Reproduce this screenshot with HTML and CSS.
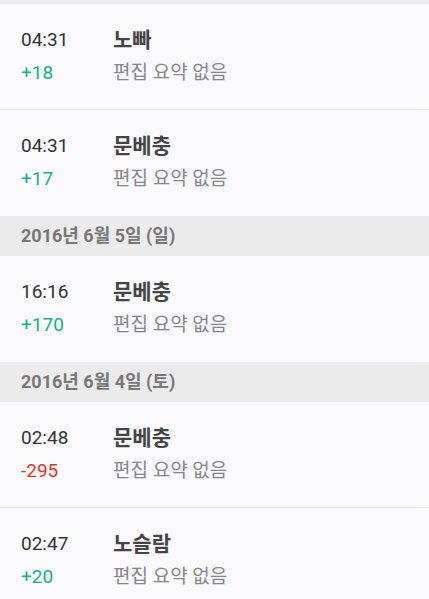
FILE: index.html
```html
<!DOCTYPE html>
<html lang="ko">
<head>
<meta charset="utf-8">
<link rel="stylesheet" href="styles.css">
</head>
<body>
<div class="list">
  <div class="top-edge"></div>
  <div class="row">
    <div class="col-time">
      <div class="time">04:31</div>
      <div class="diff plus">+18</div>
    </div>
    <div class="col-main">
      <div class="title">노빠</div>
      <div class="summary">편집 요약 없음</div>
    </div>
  </div>
  <div class="row last">
    <div class="col-time">
      <div class="time">04:31</div>
      <div class="diff plus">+17</div>
    </div>
    <div class="col-main">
      <div class="title">문베충</div>
      <div class="summary">편집 요약 없음</div>
    </div>
  </div>
  <div class="date-header">2016년 6월 5일 (일)</div>
  <div class="row last">
    <div class="col-time">
      <div class="time">16:16</div>
      <div class="diff plus">+170</div>
    </div>
    <div class="col-main">
      <div class="title">문베충</div>
      <div class="summary">편집 요약 없음</div>
    </div>
  </div>
  <div class="date-header">2016년 6월 4일 (토)</div>
  <div class="row">
    <div class="col-time">
      <div class="time">02:48</div>
      <div class="diff minus">-295</div>
    </div>
    <div class="col-main">
      <div class="title">문베충</div>
      <div class="summary">편집 요약 없음</div>
    </div>
  </div>
  <div class="row">
    <div class="col-time">
      <div class="time">02:47</div>
      <div class="diff plus">+20</div>
    </div>
    <div class="col-main">
      <div class="title">노슬람</div>
      <div class="summary">편집 요약 없음</div>
    </div>
  </div>
</div>
</body>
</html>
```
FILE: styles.css
```css
html, body {
  margin: 0;
  padding: 0;
  background: #fafafc;
  font-family: Roboto, "Noto Sans CJK KR", sans-serif;
  overflow: hidden;
}
.list {
  display: flex;
  flex-direction: column;
}
.top-edge {
  height: 2px;
  background: #f2f2f4;
  border-bottom: 2px solid #e9e9eb;
}
.row {
  display: flex;
  padding: 24px 0 24px 21px;
  border-bottom: 1px solid #e8e8ea;
  background: #fafafc;
}
.row.last {
  border-bottom: none;
  padding-bottom: 25px;
}
.col-time {
  width: 92px;
  display: flex;
  flex-direction: column;
  gap: 9px;
}
.col-main {
  display: flex;
  flex-direction: column;
  gap: 9px;
}
.time, .diff, .title, .summary {
  height: 24px;
  line-height: 24px;
}
.time {
  font-size: 19px;
  color: #333333;
}
.diff {
  font-size: 19px;
}
.plus { color: #14b08a; }
.minus { color: #e0322b; }
.title {
  font-size: 21px;
  font-weight: bold;
  color: #444444;
}
.summary {
  font-size: 19px;
  color: #86868a;
}
.date-header {
  height: 40px;
  line-height: 40px;
  padding-left: 21px;
  background: #ebebec;
  color: #777777;
  font-size: 18px;
  font-weight: bold;
}
```
